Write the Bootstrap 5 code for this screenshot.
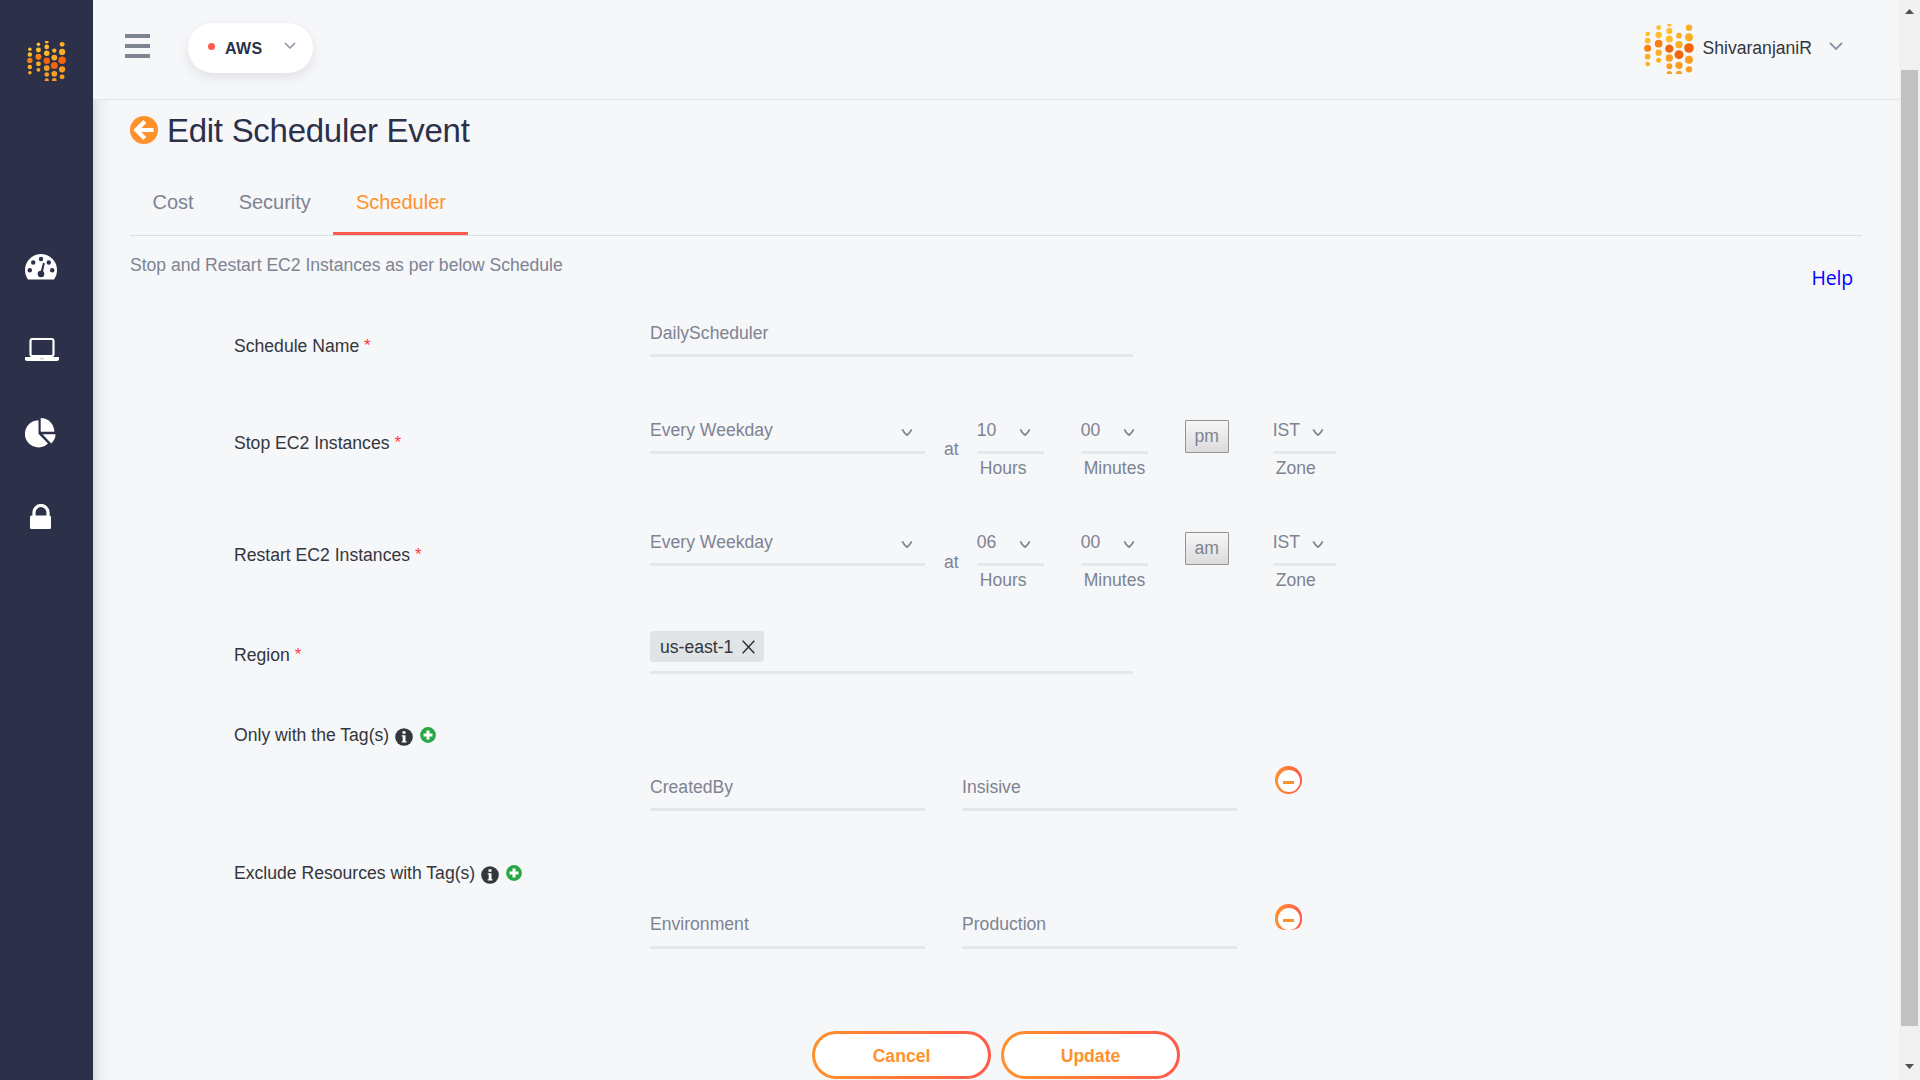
<!DOCTYPE html>
<html lang="en">
<head>
<meta charset="utf-8">
<meta name="viewport" content="width=device-width, initial-scale=1">
<title>Edit Scheduler Event</title>
<link rel="stylesheet" href="https://cdn.jsdelivr.net/npm/bootstrap@5.3.0/dist/css/bootstrap.min.css">
<style>
body{font-family:"Liberation Sans",Arial,sans-serif;font-size:17.6px;line-height:26px;background:#f6f7f9;color:#7e8392;height:100vh;overflow:hidden}
svg{display:block;flex:none}
.side{width:93px;background:#2c3049;padding-top:41px}
.side .brand{margin-left:27px;margin-bottom:173px}
.side a{height:26px;margin-left:25px}
.side .s1{margin-bottom:58px}.side .s2{margin-bottom:54px}.side .s3{margin-bottom:60px}
.topbar{height:100px;border-bottom:1px solid #dfe1e4;padding-left:32px;background:#f6f7f9}
.burger{width:25px;margin-top:34px;gap:6px}
.burger i{height:4px;background:#7e8392}
.cloud{width:125px;height:50px;margin:23px 0 0 38px;padding-left:20px;border-radius:25px;background:#fff;box-shadow:0 5px 12px rgba(44,48,73,.1);color:#2c3049;font-size:16px;letter-spacing:.4px}
.cloud strong{padding-top:1px}
.cloud svg{margin:0 17px 4px auto}
.cloud .dot{width:7px;height:7px;border-radius:50%;background:#ff5a4b;margin:-3px 10px 0 0}
.user{margin:24px 50px 0 auto;height:50px;color:#33363d}
.user b{font-weight:400;margin:-2px 17px 0 8px}
.user .arrow{margin:-5px 6px 0 0}
.page{background:linear-gradient(90deg,#dcdddf 0,#eceef0 6px,#f6f7f9 17px);padding-left:37px}
.title-text{font-size:33px;line-height:40px;color:#2c3049;padding-top:11px;font-weight:400;letter-spacing:-.28px}
.title-text svg{margin:-2px 9px 0 0}
.tabs{width:1732px;height:74px;margin-top:11px;border-bottom:1px solid #dcdee1;font-size:20px}
.tabs a{color:#7e8392;text-decoration:none;padding:27px 22.5px 0;border-bottom:3px solid transparent}
.tabs a.active{color:#ff912c;border-color:#ff5a4b}
.help{color:#00f;font-family:"Open Sans",sans-serif;font-size:19.5px;letter-spacing:-.2px;text-decoration:none;margin:29px 9px 0 0}
.intro{width:1732px;height:84px}
.intro p{padding-top:16px;letter-spacing:-.03px}
.form{padding-left:104px}
.line{height:97px}
.line.time{height:112px}
.line.time.second{height:102px}
.line.region{height:91px}
.line.tags{height:138px}
.lab{width:416px;color:#33363d;padding-top:13px}
.region .lab{padding-top:11px}
.lab sup{color:#ff3b3b;font-size:17px;top:-1px;line-height:0}
.lab .ic-info{margin:6px 7px 0 6px}
.lab .ic-plus{margin-top:5px}
.field{height:37px;padding:0 12px 8px 0;border-bottom:3px solid #e6e7e8}
.field svg{margin-top:11px}
.w-num svg{margin-right:1px}
.w-zone svg{margin-right:0}
.w-long{width:483px}.w-mid{width:275px}.w-num{width:67px}.w-zone{width:63px}
.region .w-long{height:43px}
.gap-r{margin-right:37px}
.at{margin:19px 18px 0 19px}
.second .at{margin-top:20px}
.under{padding-left:3px;padding-top:1px}
.ampm{width:44px;height:33px;margin:3px 44px 0 0;border:1px solid #949494;border-radius:1px;background:linear-gradient(#f6f6f6,#dcdcdc);color:#7e8392;line-height:29px}
.chip{width:114px;height:31px;background:#e0e4e6;border-radius:3px;color:#33363d;padding:0 9px 0 10px}
.minus{width:27px;height:28px;border-radius:50%;background:linear-gradient(90deg,#ff912c,#ff5a4b);margin:44px 0 0 1px}
.minus i{display:block;width:22px;height:22px;border-radius:50%;background:#fff;margin:4px 0 0 3px;padding:11px 0 0 5px}
.minus i::before{content:"";display:block;width:11px;height:3px;background:#ff912c}
.minus.cut{height:26px;border-radius:14px 14px 10px 10px;overflow:hidden}
.tagrow{padding-top:52px}
.exclude .field{line-height:24px}
.acts{padding:33px 0 0 682px;gap:10px}
.pill{width:179px;height:48px;border:0;border-radius:24px;padding:3px;background:linear-gradient(90deg,#ff912c,#ff5a4b);color:#ff912c}
.pill span{display:block;height:42px;line-height:42px;padding-top:1px;border-radius:21px;background:#fff;font-weight:700}
.track{width:21px;background:#f1f1f1;padding:9px 2px 11px}
.thumb{height:956px;background:#c1c1c1;width:17px;margin-top:56px}
</style>
<script src="https://cdn.jsdelivr.net/npm/bootstrap@5.3.0/dist/js/bootstrap.bundle.min.js"></script>
</head>
<body class="d-flex">
<svg width="0" height="0" class="position-absolute">
<defs>
<symbol id="dots" viewBox="0 0 150 150">
<g fill="#ffbd26"><circle cx="11" cy="30" r="7"/><circle cx="11" cy="50" r="8.500"/><circle cx="44" cy="11" r="7"/><circle cx="44" cy="33" r="9.500"/><circle cx="76" cy="1" r="7"/><circle cx="76" cy="21" r="9"/><circle cx="76" cy="45" r="10.500"/></g>
<g fill="#fcae24"><circle cx="11" cy="98" r="8.500"/><circle cx="11" cy="120" r="7"/><circle cx="44" cy="86" r="9.500"/><circle cx="44" cy="109" r="7.500"/><circle cx="105" cy="35" r="8.500"/><circle cx="105" cy="62" r="11"/><circle cx="135" cy="11" r="9.500"/><circle cx="135" cy="40" r="12"/></g>
<g fill="#fb9d21"><circle cx="76" cy="102" r="11"/><circle cx="76" cy="127" r="9"/><circle cx="76" cy="149" r="8"/><circle cx="105" cy="124" r="11"/><circle cx="105" cy="149" r="9"/><circle cx="135" cy="107" r="12"/><circle cx="135" cy="136" r="9.500"/></g>
<g fill="#fb8012"><circle cx="11" cy="73" r="10.500"/><circle cx="44" cy="59" r="11.500"/></g>
<g fill="#f1650d"><circle cx="76" cy="74" r="12.500"/><circle cx="105" cy="92" r="13.500"/><circle cx="135" cy="72" r="14.500"/></g>
</symbol>
<symbol id="chev" viewBox="0 0 12 9"><path d="M1.300 1.300C2.600 4 4.200 5.500 6 7.200 7.800 5.500 9.400 4 10.700 1.300" fill="none" stroke="#7e8392" stroke-width="1.700"/></symbol>
<symbol id="info" viewBox="0 0 18 18"><circle cx="9" cy="9" r="8.800" fill="#33363d"/><path d="M7.500 3.200h3v2.500h-3zM6.700 7.200h3.800v6h1v1.400H6.700v-1.400h1V8.600h-1z" fill="#fff"/></symbol>
<symbol id="plus" viewBox="0 0 16 16"><circle cx="8" cy="8" r="7.900" fill="#28a745"/><path d="M6.500 3.500h3v3h3v3h-3v3h-3v-3h-3v-3h3z" fill="#fff"/></symbol>
</defs>
</svg>
<aside class="side d-flex flex-column flex-shrink-0">
<svg class="brand" width="39" height="40"><use href="#dots"/></svg>
<a href="#" class="s1"><svg width="32" height="26" viewBox="0 0 32 26"><path d="M3 25.500C1 22.500 0 19.500 0 16a16 16 0 0 1 32 0c0 3.500-1 6.500-3 9.500z" fill="#fff"/><g fill="#2c3049"><circle cx="16" cy="5" r="2.200"/><circle cx="8.200" cy="8.500" r="2.200"/><circle cx="23.800" cy="8.500" r="2.200"/><circle cx="4.800" cy="16.300" r="2.200"/><circle cx="27.200" cy="16.300" r="2.200"/><circle cx="16" cy="20" r="3.300"/><path d="M18 8.800l1.800.5-2 9.500-2.300-.5z"/></g></svg></a>
<a href="#" class="s2"><svg width="34" height="23" viewBox="0 0 34 23"><rect x="5.500" y="1" width="23" height="17" rx="2" fill="none" stroke="#fff" stroke-width="2.200"/><path d="M0 19h34v2.300Q34 23 32 23H2Q0 23 0 21.300z" fill="#fff"/><path d="M15 20.800h4" stroke="#bbb"/></svg></a>
<a href="#" class="s3"><svg width="31" height="30" viewBox="0 0 31 30"><path d="M13.500 2.200v13.500l9.500 9.800A13.600 13.600 0 1 1 13.500 2.200z" fill="#fff"/><path d="M15.700 0A13.800 13.800 0 0 1 29.300 13.700H15.700z" fill="#fff"/><path d="M17.500 16.200h13a13 13 0 0 1-4.200 9.200z" fill="#fff"/></svg></a>
<a href="#"><svg width="32" height="26" viewBox="0 0 32 26"><path d="M9 12.500V8.500a7 7 0 0 1 14 0v4" fill="none" stroke="#fff" stroke-width="3.200"/><rect x="5" y="11.500" width="21" height="13.500" rx="1.500" fill="#fff"/></svg></a>
</aside>
<main class="d-flex flex-column flex-grow-1">
<header class="topbar d-flex align-items-start flex-shrink-0">
<div class="burger d-flex flex-column"><i></i><i></i><i></i></div>
<div class="cloud d-flex align-items-center"><span class="dot"></span><strong>AWS</strong><svg width="12" height="8" viewBox="0 0 12 8"><path d="M1 1l5 5 5-5" fill="none" stroke="#8b90a0" stroke-width="1.500"/></svg></div>
<div class="user d-flex align-items-center"><svg width="50" height="50"><use href="#dots"/></svg><b>ShivaranjaniR</b><svg class="arrow" width="14" height="9" viewBox="0 0 14 9"><path d="M1 1l6 6 6-6" fill="none" stroke="#8795a5" stroke-width="1.800"/></svg></div>
</header>
<section class="page flex-grow-1">
<h1 class="title-text d-flex align-items-center mb-0"><svg width="28" height="28" viewBox="0 0 28 28"><circle cx="14" cy="14" r="14" fill="#ff912c"/><path d="M14.800 5.500L6.300 14l8.500 8.500M7.500 14H23.500" fill="none" stroke="#fff" stroke-width="4.200"/></svg>Edit Scheduler Event</h1>
<nav class="tabs d-flex"><a href="#">Cost</a><a href="#">Security</a><a href="#" class="active">Scheduler</a></nav>
<div class="intro d-flex justify-content-between"><p class="m-0">Stop and Restart EC2 Instances as per below Schedule</p><a class="help" href="#">Help</a></div>
<div class="form">
<div class="line d-flex"><div class="lab">Schedule Name <sup>*</sup></div><div class="field w-long">DailyScheduler</div></div>
<div class="line time d-flex align-items-start"><div class="lab">Stop EC2 Instances <sup>*</sup></div>
<div class="field w-mid d-flex justify-content-between">Every Weekday<svg width="12" height="9"><use href="#chev"/></svg></div><span class="at">at</span>
<div class="gap-r"><div class="field w-num d-flex justify-content-between">10<svg width="12" height="9"><use href="#chev"/></svg></div><div class="under">Hours</div></div>
<div class="gap-r"><div class="field w-num d-flex justify-content-between">00<svg width="12" height="9"><use href="#chev"/></svg></div><div class="under">Minutes</div></div>
<button class="ampm p-0">pm</button>
<div><div class="field w-zone d-flex justify-content-between">IST<svg width="12" height="9"><use href="#chev"/></svg></div><div class="under">Zone</div></div></div>
<div class="line time second d-flex align-items-start"><div class="lab">Restart EC2 Instances <sup>*</sup></div>
<div class="field w-mid d-flex justify-content-between">Every Weekday<svg width="12" height="9"><use href="#chev"/></svg></div><span class="at">at</span>
<div class="gap-r"><div class="field w-num d-flex justify-content-between">06<svg width="12" height="9"><use href="#chev"/></svg></div><div class="under">Hours</div></div>
<div class="gap-r"><div class="field w-num d-flex justify-content-between">00<svg width="12" height="9"><use href="#chev"/></svg></div><div class="under">Minutes</div></div>
<button class="ampm p-0">am</button>
<div><div class="field w-zone d-flex justify-content-between">IST<svg width="12" height="9"><use href="#chev"/></svg></div><div class="under">Zone</div></div></div>
<div class="line region d-flex align-items-start"><div class="lab">Region <sup>*</sup></div>
<div class="field w-long p-0"><div class="chip d-flex align-items-center justify-content-between">us-east-1<svg class="m-0" width="13" height="14" viewBox="0 0 13 14"><path d="M.7.7l11.600 12.600M12.300.7L.7 13.300" stroke="#33363d" stroke-width="1.600"/></svg></div></div></div>
<div class="line tags d-flex align-items-start"><div class="lab pt-0 d-flex">Only with the Tag(s)<svg class="ic-info" width="18" height="18"><use href="#info"/></svg><svg class="ic-plus" width="16" height="16"><use href="#plus"/></svg></div>
<div class="tagrow d-flex gap-r"><div class="field w-mid gap-r">CreatedBy</div><div class="field w-mid">Insisive</div></div><div class="minus"><i></i></div></div>
<div class="line tags exclude d-flex align-items-start"><div class="lab pt-0 d-flex">Exclude Resources with Tag(s)<svg class="ic-info" width="18" height="18"><use href="#info"/></svg><svg class="ic-plus" width="16" height="16"><use href="#plus"/></svg></div>
<div class="tagrow d-flex gap-r"><div class="field w-mid gap-r">Environment</div><div class="field w-mid">Production</div></div><div class="minus cut"><i></i></div></div>
</div>
<div class="acts d-flex"><button class="pill"><span>Cancel</span></button><button class="pill"><span>Update</span></button></div>
</section>
</main>
<div class="track d-flex flex-column align-items-center flex-shrink-0"><svg width="9" height="5" viewBox="0 0 9 5"><path d="M0 5L4.500 0 9 5z" fill="#505050"/></svg><div class="thumb"></div><svg class="mt-auto" width="9" height="5" viewBox="0 0 9 5"><path d="M0 0l4.500 5L9 0z" fill="#505050"/></svg></div>
</body>
</html>
